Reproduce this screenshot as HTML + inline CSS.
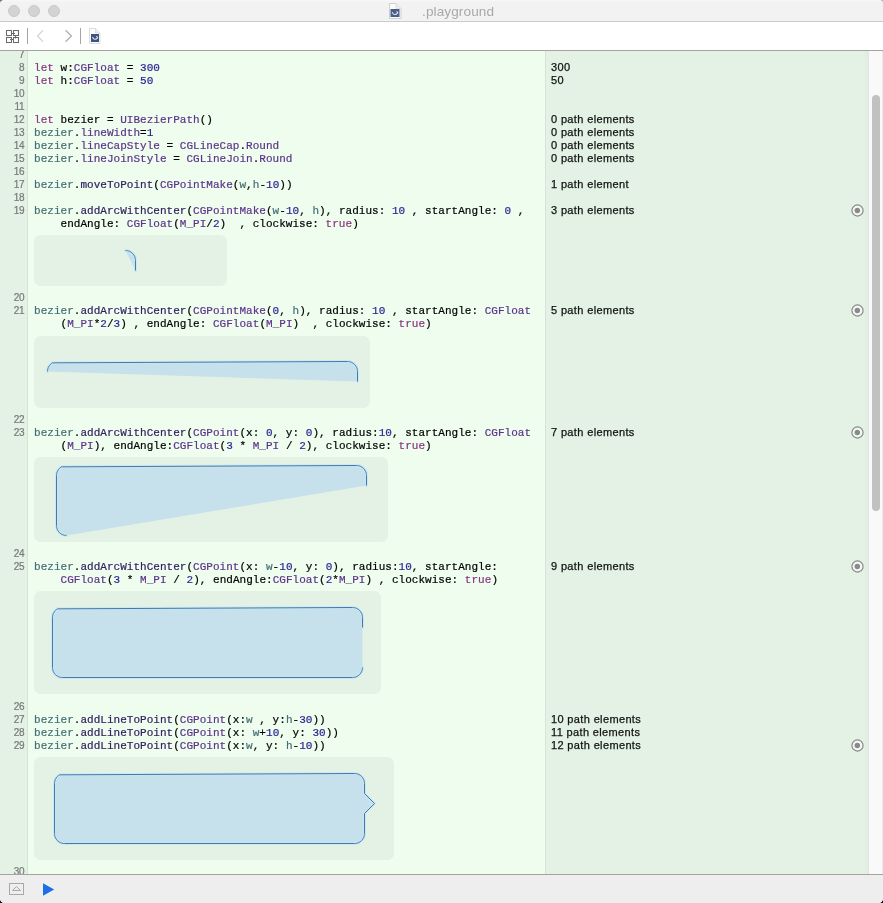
<!DOCTYPE html>
<html><head><meta charset="utf-8"><title>playground</title>
<style>
*{margin:0;padding:0;box-sizing:border-box}
html,body{width:883px;height:903px;overflow:hidden;background:linear-gradient(transparent 50%,#111517 50%),linear-gradient(to right,#6f7782,#b9c1ca)}
#win{position:absolute;left:0;top:0;width:883px;height:903px;overflow:hidden;border-radius:4.5px;background:#fff}
body{position:relative;font-family:"Liberation Sans",sans-serif}
i{font-style:normal}
#tb{position:absolute;left:0;top:0;width:883px;height:22px;background:linear-gradient(#f7f7f7,#f2f2f2 3px);border-bottom:1px solid #cbcbcb}
.tl{position:absolute;top:5px;width:12px;height:12px;border-radius:50%;background:#d3d3d3;border:1px solid #c8c8c8}
#ttl{position:absolute;left:421.5px;top:3.5px;font-size:13.6px;color:#a9a9a9;letter-spacing:0.1px;will-change:transform}
#toolbar{position:absolute;left:0;top:22px;width:883px;height:29px;background:#fff;border-bottom:1px solid #a3a3a3}
#ed{position:absolute;left:0;top:51px;width:883px;height:823px;background:#effdef;overflow:hidden}
#gut{position:absolute;left:0;top:0;width:28px;height:823px;background:#e4f2e5;border-right:1px solid #d3e3d4}
#res{position:absolute;left:545px;top:0;width:323px;height:823px;background:linear-gradient(to right,#e3f2e4 318px,#dfe9e2 323px);border-left:1px solid #d6e4d7}
#sb{position:absolute;left:868px;top:0;width:15px;height:823px;background:#f9f9fa;border-left:1px solid #e4e6e4;box-shadow:inset -1px 0 #ebebeb}
#thumb{position:absolute;left:872px;top:44px;width:8px;height:416px;border-radius:4px;background:#c1c1c1}
.ln{position:absolute;left:0;width:24.2px;text-align:right;font-size:10px;line-height:13px;color:#777;height:13px;will-change:transform;letter-spacing:-0.3px;-webkit-text-stroke:0.2px}
.cd{position:absolute;left:34px;font-family:"Liberation Mono",monospace;font-size:11px;line-height:13px;white-space:pre;color:#000;letter-spacing:0.024px;will-change:transform;-webkit-text-stroke:0.2px}
.rs{position:absolute;left:551px;font-size:11px;line-height:13px;white-space:pre;color:#111;letter-spacing:0.36px;will-change:transform;-webkit-text-stroke:0.25px}
.k{color:#88357F}.n{color:#2B248F}.c{color:#5B3489}.p{color:#436E72}.m{color:#33205F}
.pv{position:absolute;background:#e3f2e4;border-radius:6.5px}
.shp{position:absolute;left:0;top:-51px}
.eye{position:absolute;left:851px;width:12px;height:12px;border-radius:50%;border:1px solid #8d8d8d}
.eye i{position:absolute;left:2.5px;top:2.5px;width:5px;height:5px;border-radius:50%;background:#8a8a8a}
#bot{position:absolute;left:0;top:874px;width:883px;height:29px;background:#eeeeee;border-top:1px solid #a3a3a3}
</style></head><body><div id="win">
<div id="tb">
 <div class="tl" style="left:8px"></div><div class="tl" style="left:28px"></div><div class="tl" style="left:48px"></div>
 <div id="ttl">.playground</div>
</div>
<div id="toolbar"></div>
<svg style="position:absolute;left:0;top:0" width="883" height="51" viewBox="0 0 883 51">
<g fill="none" stroke="#6c6c6c" stroke-width="1.05">
<rect x="6.5" y="30.5" width="5" height="5"/><rect x="13.5" y="30.5" width="5" height="5"/>
<rect x="6.5" y="37.5" width="5" height="5"/><rect x="13.5" y="37.5" width="5" height="5"/>
<path d="M12 33.5H15M15.5 36V38.5M10 39.5H13"/>
</g>
<path d="M27.5 28V44M80.5 28V44" stroke="#a4a4a4" stroke-width="1"/>
<path d="M43 30.3L37.6 36L43 41.7" fill="none" stroke="#d6d6d6" stroke-width="1.3"/>
<path d="M65.6 30.3L71.4 36L65.6 41.7" fill="none" stroke="#b0b0b0" stroke-width="1.3"/>
<path d="M89.5 28.5H95.5L100 33V43.5H89.5Z" fill="#fcfcfc" stroke="#dcdcdc" stroke-width="1"/>
<path d="M95.5 28.5V33H100" fill="#eeeeee" stroke="#d8d8d8" stroke-width="0.8"/>
<rect x="91" y="34" width="8" height="8" fill="#3e5380"/>
<path d="M92.6 36.8C93.2 39.6 95.8 40.2 97.6 37.6L96.4 36.2" fill="none" stroke="#dde4f0" stroke-width="1.1"/>
<path d="M389.5 3.5H396L401 8.5V18.5H389.5Z" fill="#fbfbfb" stroke="#cfcfcf" stroke-width="1"/>
<path d="M396 3.5V8.5H401" fill="#eeeeee" stroke="#d8d8d8" stroke-width="0.8"/>
<rect x="390.5" y="9" width="9" height="8" fill="#4a5f85"/>
<path d="M392.2 12C392.8 14.8 395.6 15.4 397.8 12.8L396.6 11.4" fill="none" stroke="#dde4f0" stroke-width="1.1"/>
</svg>
<div id="ed">
<div id="gut"></div>
<div id="res"></div>
<div id="sb"></div>
<div id="thumb"></div>
<div class="pv" style="left:34px;top:184px;width:193px;height:51px"></div><div class="pv" style="left:34px;top:284.5px;width:336px;height:72.5px"></div><div class="pv" style="left:34px;top:406px;width:354px;height:85px"></div><div class="pv" style="left:34px;top:540px;width:347px;height:103px"></div><div class="pv" style="left:34px;top:706px;width:360px;height:103px"></div>
<svg class="shp" width="883" height="903" viewBox="0 0 883 903"><path d="M135.50 270.50 L135.50 260.50 L135.45 259.52 L135.31 258.55 L135.07 257.60 L134.74 256.67 L134.32 255.79 L133.81 254.94 L133.23 254.16 L132.57 253.43 L131.84 252.77 L131.06 252.19 L130.21 251.68 L129.33 251.26 L128.40 250.93 L127.45 250.69 L126.48 250.55 L125.50 250.50 Z" fill="#C6E1EB" stroke="none"/><path d="M135.50 270.50 L135.50 260.50 L135.45 259.52 L135.31 258.55 L135.07 257.60 L134.74 256.67 L134.32 255.79 L133.81 254.94 L133.23 254.16 L132.57 253.43 L131.84 252.77 L131.06 252.19 L130.21 251.68 L129.33 251.26 L128.40 250.93 L127.45 250.69 L126.48 250.55 L125.50 250.50" fill="none" stroke="#c4e6f8" stroke-width="3" stroke-linejoin="round" stroke-linecap="round" opacity="0.8"/><path d="M135.50 270.50 L135.50 260.50 L135.45 259.52 L135.31 258.55 L135.07 257.60 L134.74 256.67 L134.32 255.79 L133.81 254.94 L133.23 254.16 L132.57 253.43 L131.84 252.77 L131.06 252.19 L130.21 251.68 L129.33 251.26 L128.40 250.93 L127.45 250.69 L126.48 250.55 L125.50 250.50" fill="none" stroke="#4679A6" stroke-width="1"/><path d="M357.50 381.50 L357.50 371.50 L357.45 370.52 L357.31 369.55 L357.07 368.60 L356.74 367.67 L356.32 366.79 L355.81 365.94 L355.23 365.16 L354.57 364.43 L353.84 363.77 L353.06 363.19 L352.21 362.68 L351.33 362.26 L350.40 361.93 L349.45 361.69 L348.48 361.55 L347.50 361.50 L52.50 362.84 L51.94 363.19 L51.41 363.57 L50.91 363.98 L50.43 364.43 L49.98 364.91 L49.57 365.41 L49.19 365.94 L48.84 366.50 L48.53 367.08 L48.26 367.67 L48.03 368.29 L47.84 368.91 L47.69 369.55 L47.59 370.19 L47.52 370.85 L47.50 371.50 Z" fill="#C6E1EB" stroke="none"/><path d="M357.50 381.50 L357.50 371.50 L357.45 370.52 L357.31 369.55 L357.07 368.60 L356.74 367.67 L356.32 366.79 L355.81 365.94 L355.23 365.16 L354.57 364.43 L353.84 363.77 L353.06 363.19 L352.21 362.68 L351.33 362.26 L350.40 361.93 L349.45 361.69 L348.48 361.55 L347.50 361.50 L52.50 362.84 L51.94 363.19 L51.41 363.57 L50.91 363.98 L50.43 364.43 L49.98 364.91 L49.57 365.41 L49.19 365.94 L48.84 366.50 L48.53 367.08 L48.26 367.67 L48.03 368.29 L47.84 368.91 L47.69 369.55 L47.59 370.19 L47.52 370.85 L47.50 371.50" fill="none" stroke="#c4e6f8" stroke-width="3" stroke-linejoin="round" stroke-linecap="round" opacity="0.8"/><path d="M357.50 381.50 L357.50 371.50 L357.45 370.52 L357.31 369.55 L357.07 368.60 L356.74 367.67 L356.32 366.79 L355.81 365.94 L355.23 365.16 L354.57 364.43 L353.84 363.77 L353.06 363.19 L352.21 362.68 L351.33 362.26 L350.40 361.93 L349.45 361.69 L348.48 361.55 L347.50 361.50 L52.50 362.84 L51.94 363.19 L51.41 363.57 L50.91 363.98 L50.43 364.43 L49.98 364.91 L49.57 365.41 L49.19 365.94 L48.84 366.50 L48.53 367.08 L48.26 367.67 L48.03 368.29 L47.84 368.91 L47.69 369.55 L47.59 370.19 L47.52 370.85 L47.50 371.50" fill="none" stroke="#4679A6" stroke-width="1"/><path d="M366.50 485.50 L366.50 475.50 L366.45 474.52 L366.31 473.55 L366.07 472.60 L365.74 471.67 L365.32 470.79 L364.81 469.94 L364.23 469.16 L363.57 468.43 L362.84 467.77 L362.06 467.19 L361.21 466.68 L360.33 466.26 L359.40 465.93 L358.45 465.69 L357.48 465.55 L356.50 465.50 L61.50 466.84 L60.94 467.19 L60.41 467.57 L59.91 467.98 L59.43 468.43 L58.98 468.91 L58.57 469.41 L58.19 469.94 L57.84 470.50 L57.53 471.08 L57.26 471.67 L57.03 472.29 L56.84 472.91 L56.69 473.55 L56.59 474.19 L56.52 474.85 L56.50 475.50 L56.50 525.50 L56.55 526.48 L56.69 527.45 L56.93 528.40 L57.26 529.33 L57.68 530.21 L58.19 531.06 L58.77 531.84 L59.43 532.57 L60.16 533.23 L60.94 533.81 L61.79 534.32 L62.67 534.74 L63.60 535.07 L64.55 535.31 L65.52 535.45 L66.50 535.50 Z" fill="#C6E1EB" stroke="none"/><path d="M366.50 485.50 L366.50 475.50 L366.45 474.52 L366.31 473.55 L366.07 472.60 L365.74 471.67 L365.32 470.79 L364.81 469.94 L364.23 469.16 L363.57 468.43 L362.84 467.77 L362.06 467.19 L361.21 466.68 L360.33 466.26 L359.40 465.93 L358.45 465.69 L357.48 465.55 L356.50 465.50 L61.50 466.84 L60.94 467.19 L60.41 467.57 L59.91 467.98 L59.43 468.43 L58.98 468.91 L58.57 469.41 L58.19 469.94 L57.84 470.50 L57.53 471.08 L57.26 471.67 L57.03 472.29 L56.84 472.91 L56.69 473.55 L56.59 474.19 L56.52 474.85 L56.50 475.50 L56.50 525.50 L56.55 526.48 L56.69 527.45 L56.93 528.40 L57.26 529.33 L57.68 530.21 L58.19 531.06 L58.77 531.84 L59.43 532.57 L60.16 533.23 L60.94 533.81 L61.79 534.32 L62.67 534.74 L63.60 535.07 L64.55 535.31 L65.52 535.45 L66.50 535.50" fill="none" stroke="#c4e6f8" stroke-width="3" stroke-linejoin="round" stroke-linecap="round" opacity="0.8"/><path d="M366.50 485.50 L366.50 475.50 L366.45 474.52 L366.31 473.55 L366.07 472.60 L365.74 471.67 L365.32 470.79 L364.81 469.94 L364.23 469.16 L363.57 468.43 L362.84 467.77 L362.06 467.19 L361.21 466.68 L360.33 466.26 L359.40 465.93 L358.45 465.69 L357.48 465.55 L356.50 465.50 L61.50 466.84 L60.94 467.19 L60.41 467.57 L59.91 467.98 L59.43 468.43 L58.98 468.91 L58.57 469.41 L58.19 469.94 L57.84 470.50 L57.53 471.08 L57.26 471.67 L57.03 472.29 L56.84 472.91 L56.69 473.55 L56.59 474.19 L56.52 474.85 L56.50 475.50 L56.50 525.50 L56.55 526.48 L56.69 527.45 L56.93 528.40 L57.26 529.33 L57.68 530.21 L58.19 531.06 L58.77 531.84 L59.43 532.57 L60.16 533.23 L60.94 533.81 L61.79 534.32 L62.67 534.74 L63.60 535.07 L64.55 535.31 L65.52 535.45 L66.50 535.50" fill="none" stroke="#4679A6" stroke-width="1"/><path d="M362.50 627.50 L362.50 617.50 L362.45 616.52 L362.31 615.55 L362.07 614.60 L361.74 613.67 L361.32 612.79 L360.81 611.94 L360.23 611.16 L359.57 610.43 L358.84 609.77 L358.06 609.19 L357.21 608.68 L356.33 608.26 L355.40 607.93 L354.45 607.69 L353.48 607.55 L352.50 607.50 L57.50 608.84 L56.94 609.19 L56.41 609.57 L55.91 609.98 L55.43 610.43 L54.98 610.91 L54.57 611.41 L54.19 611.94 L53.84 612.50 L53.53 613.08 L53.26 613.67 L53.03 614.29 L52.84 614.91 L52.69 615.55 L52.59 616.19 L52.52 616.85 L52.50 617.50 L52.50 667.50 L52.55 668.48 L52.69 669.45 L52.93 670.40 L53.26 671.33 L53.68 672.21 L54.19 673.06 L54.77 673.84 L55.43 674.57 L56.16 675.23 L56.94 675.81 L57.79 676.32 L58.67 676.74 L59.60 677.07 L60.55 677.31 L61.52 677.45 L62.50 677.50 L352.50 677.50 L353.48 677.45 L354.45 677.31 L355.40 677.07 L356.33 676.74 L357.21 676.32 L358.06 675.81 L358.84 675.23 L359.57 674.57 L360.23 673.84 L360.81 673.06 L361.32 672.21 L361.74 671.33 L362.07 670.40 L362.31 669.45 L362.45 668.48 L362.50 667.50 Z" fill="#C6E1EB" stroke="none"/><path d="M362.50 627.50 L362.50 617.50 L362.45 616.52 L362.31 615.55 L362.07 614.60 L361.74 613.67 L361.32 612.79 L360.81 611.94 L360.23 611.16 L359.57 610.43 L358.84 609.77 L358.06 609.19 L357.21 608.68 L356.33 608.26 L355.40 607.93 L354.45 607.69 L353.48 607.55 L352.50 607.50 L57.50 608.84 L56.94 609.19 L56.41 609.57 L55.91 609.98 L55.43 610.43 L54.98 610.91 L54.57 611.41 L54.19 611.94 L53.84 612.50 L53.53 613.08 L53.26 613.67 L53.03 614.29 L52.84 614.91 L52.69 615.55 L52.59 616.19 L52.52 616.85 L52.50 617.50 L52.50 667.50 L52.55 668.48 L52.69 669.45 L52.93 670.40 L53.26 671.33 L53.68 672.21 L54.19 673.06 L54.77 673.84 L55.43 674.57 L56.16 675.23 L56.94 675.81 L57.79 676.32 L58.67 676.74 L59.60 677.07 L60.55 677.31 L61.52 677.45 L62.50 677.50 L352.50 677.50 L353.48 677.45 L354.45 677.31 L355.40 677.07 L356.33 676.74 L357.21 676.32 L358.06 675.81 L358.84 675.23 L359.57 674.57 L360.23 673.84 L360.81 673.06 L361.32 672.21 L361.74 671.33 L362.07 670.40 L362.31 669.45 L362.45 668.48 L362.50 667.50" fill="none" stroke="#c4e6f8" stroke-width="3" stroke-linejoin="round" stroke-linecap="round" opacity="0.8"/><path d="M362.50 627.50 L362.50 617.50 L362.45 616.52 L362.31 615.55 L362.07 614.60 L361.74 613.67 L361.32 612.79 L360.81 611.94 L360.23 611.16 L359.57 610.43 L358.84 609.77 L358.06 609.19 L357.21 608.68 L356.33 608.26 L355.40 607.93 L354.45 607.69 L353.48 607.55 L352.50 607.50 L57.50 608.84 L56.94 609.19 L56.41 609.57 L55.91 609.98 L55.43 610.43 L54.98 610.91 L54.57 611.41 L54.19 611.94 L53.84 612.50 L53.53 613.08 L53.26 613.67 L53.03 614.29 L52.84 614.91 L52.69 615.55 L52.59 616.19 L52.52 616.85 L52.50 617.50 L52.50 667.50 L52.55 668.48 L52.69 669.45 L52.93 670.40 L53.26 671.33 L53.68 672.21 L54.19 673.06 L54.77 673.84 L55.43 674.57 L56.16 675.23 L56.94 675.81 L57.79 676.32 L58.67 676.74 L59.60 677.07 L60.55 677.31 L61.52 677.45 L62.50 677.50 L352.50 677.50 L353.48 677.45 L354.45 677.31 L355.40 677.07 L356.33 676.74 L357.21 676.32 L358.06 675.81 L358.84 675.23 L359.57 674.57 L360.23 673.84 L360.81 673.06 L361.32 672.21 L361.74 671.33 L362.07 670.40 L362.31 669.45 L362.45 668.48 L362.50 667.50" fill="none" stroke="#4679A6" stroke-width="1"/><path d="M364.50 793.50 L364.50 783.50 L364.45 782.52 L364.31 781.55 L364.07 780.60 L363.74 779.67 L363.32 778.79 L362.81 777.94 L362.23 777.16 L361.57 776.43 L360.84 775.77 L360.06 775.19 L359.21 774.68 L358.33 774.26 L357.40 773.93 L356.45 773.69 L355.48 773.55 L354.50 773.50 L59.50 774.84 L58.94 775.19 L58.41 775.57 L57.91 775.98 L57.43 776.43 L56.98 776.91 L56.57 777.41 L56.19 777.94 L55.84 778.50 L55.53 779.08 L55.26 779.67 L55.03 780.29 L54.84 780.91 L54.69 781.55 L54.59 782.19 L54.52 782.85 L54.50 783.50 L54.50 833.50 L54.55 834.48 L54.69 835.45 L54.93 836.40 L55.26 837.33 L55.68 838.21 L56.19 839.06 L56.77 839.84 L57.43 840.57 L58.16 841.23 L58.94 841.81 L59.79 842.32 L60.67 842.74 L61.60 843.07 L62.55 843.31 L63.52 843.45 L64.50 843.50 L354.50 843.50 L355.48 843.45 L356.45 843.31 L357.40 843.07 L358.33 842.74 L359.21 842.32 L360.06 841.81 L360.84 841.23 L361.57 840.57 L362.23 839.84 L362.81 839.06 L363.32 838.21 L363.74 837.33 L364.07 836.40 L364.31 835.45 L364.45 834.48 L364.50 833.50 L364.50 813.50 L374.50 803.50 L364.50 793.50 Z" fill="#C6E1EB" stroke="none"/><path d="M364.50 793.50 L364.50 783.50 L364.45 782.52 L364.31 781.55 L364.07 780.60 L363.74 779.67 L363.32 778.79 L362.81 777.94 L362.23 777.16 L361.57 776.43 L360.84 775.77 L360.06 775.19 L359.21 774.68 L358.33 774.26 L357.40 773.93 L356.45 773.69 L355.48 773.55 L354.50 773.50 L59.50 774.84 L58.94 775.19 L58.41 775.57 L57.91 775.98 L57.43 776.43 L56.98 776.91 L56.57 777.41 L56.19 777.94 L55.84 778.50 L55.53 779.08 L55.26 779.67 L55.03 780.29 L54.84 780.91 L54.69 781.55 L54.59 782.19 L54.52 782.85 L54.50 783.50 L54.50 833.50 L54.55 834.48 L54.69 835.45 L54.93 836.40 L55.26 837.33 L55.68 838.21 L56.19 839.06 L56.77 839.84 L57.43 840.57 L58.16 841.23 L58.94 841.81 L59.79 842.32 L60.67 842.74 L61.60 843.07 L62.55 843.31 L63.52 843.45 L64.50 843.50 L354.50 843.50 L355.48 843.45 L356.45 843.31 L357.40 843.07 L358.33 842.74 L359.21 842.32 L360.06 841.81 L360.84 841.23 L361.57 840.57 L362.23 839.84 L362.81 839.06 L363.32 838.21 L363.74 837.33 L364.07 836.40 L364.31 835.45 L364.45 834.48 L364.50 833.50 L364.50 813.50 L374.50 803.50 L364.50 793.50" fill="none" stroke="#c4e6f8" stroke-width="3" stroke-linejoin="round" stroke-linecap="round" opacity="0.8"/><path d="M364.50 793.50 L364.50 783.50 L364.45 782.52 L364.31 781.55 L364.07 780.60 L363.74 779.67 L363.32 778.79 L362.81 777.94 L362.23 777.16 L361.57 776.43 L360.84 775.77 L360.06 775.19 L359.21 774.68 L358.33 774.26 L357.40 773.93 L356.45 773.69 L355.48 773.55 L354.50 773.50 L59.50 774.84 L58.94 775.19 L58.41 775.57 L57.91 775.98 L57.43 776.43 L56.98 776.91 L56.57 777.41 L56.19 777.94 L55.84 778.50 L55.53 779.08 L55.26 779.67 L55.03 780.29 L54.84 780.91 L54.69 781.55 L54.59 782.19 L54.52 782.85 L54.50 783.50 L54.50 833.50 L54.55 834.48 L54.69 835.45 L54.93 836.40 L55.26 837.33 L55.68 838.21 L56.19 839.06 L56.77 839.84 L57.43 840.57 L58.16 841.23 L58.94 841.81 L59.79 842.32 L60.67 842.74 L61.60 843.07 L62.55 843.31 L63.52 843.45 L64.50 843.50 L354.50 843.50 L355.48 843.45 L356.45 843.31 L357.40 843.07 L358.33 842.74 L359.21 842.32 L360.06 841.81 L360.84 841.23 L361.57 840.57 L362.23 839.84 L362.81 839.06 L363.32 838.21 L363.74 837.33 L364.07 836.40 L364.31 835.45 L364.45 834.48 L364.50 833.50 L364.50 813.50 L374.50 803.50 L364.50 793.50" fill="none" stroke="#4679A6" stroke-width="1"/></svg>
<div class="ln" style="top:-3px">7</div>
<div class="ln" style="top:10px">8</div>
<div class="ln" style="top:23px">9</div>
<div class="ln" style="top:36px">10</div>
<div class="ln" style="top:49px">11</div>
<div class="ln" style="top:62px">12</div>
<div class="ln" style="top:75px">13</div>
<div class="ln" style="top:88px">14</div>
<div class="ln" style="top:101px">15</div>
<div class="ln" style="top:114px">16</div>
<div class="ln" style="top:127px">17</div>
<div class="ln" style="top:140px">18</div>
<div class="ln" style="top:153px">19</div>
<div class="ln" style="top:240px">20</div>
<div class="ln" style="top:253px">21</div>
<div class="ln" style="top:362px">22</div>
<div class="ln" style="top:375px">23</div>
<div class="ln" style="top:496px">24</div>
<div class="ln" style="top:509px">25</div>
<div class="ln" style="top:649px">26</div>
<div class="ln" style="top:662px">27</div>
<div class="ln" style="top:675px">28</div>
<div class="ln" style="top:688px">29</div>
<div class="ln" style="top:814px">30</div>
<div class="cd" style="top:11px"><i class="k">let</i> w:<i class="c">CGFloat</i> = <i class="n">300</i></div>
<div class="cd" style="top:24px"><i class="k">let</i> h:<i class="c">CGFloat</i> = <i class="n">50</i></div>
<div class="cd" style="top:63px"><i class="k">let</i> bezier = <i class="c">UIBezierPath</i>()</div>
<div class="cd" style="top:76px"><i class="p">bezier</i>.<i class="c">lineWidth</i>=<i class="n">1</i></div>
<div class="cd" style="top:89px"><i class="p">bezier</i>.<i class="c">lineCapStyle</i> = <i class="c">CGLineCap</i>.<i class="c">Round</i></div>
<div class="cd" style="top:102px"><i class="p">bezier</i>.<i class="c">lineJoinStyle</i> = <i class="c">CGLineJoin</i>.<i class="c">Round</i></div>
<div class="cd" style="top:128px"><i class="p">bezier</i>.<i class="m">moveToPoint</i>(<i class="c">CGPointMake</i>(<i class="p">w</i>,<i class="p">h</i>-<i class="n">10</i>))</div>
<div class="cd" style="top:154px"><i class="p">bezier</i>.<i class="m">addArcWithCenter</i>(<i class="c">CGPointMake</i>(<i class="p">w</i>-<i class="n">10</i>, <i class="p">h</i>), radius: <i class="n">10</i> , startAngle: <i class="n">0</i> ,</div>
<div class="cd" style="top:167px">    endAngle: <i class="c">CGFloat</i>(<i class="c">M_PI</i>/<i class="n">2</i>)  , clockwise: <i class="k">true</i>)</div>
<div class="cd" style="top:254px"><i class="p">bezier</i>.<i class="m">addArcWithCenter</i>(<i class="c">CGPointMake</i>(<i class="n">0</i>, <i class="p">h</i>), radius: <i class="n">10</i> , startAngle: <i class="c">CGFloat</i></div>
<div class="cd" style="top:267px">    (<i class="c">M_PI</i>*<i class="n">2</i>/<i class="n">3</i>) , endAngle: <i class="c">CGFloat</i>(<i class="c">M_PI</i>)  , clockwise: <i class="k">true</i>)</div>
<div class="cd" style="top:376px"><i class="p">bezier</i>.<i class="m">addArcWithCenter</i>(<i class="c">CGPoint</i>(x: <i class="n">0</i>, y: <i class="n">0</i>), radius:<i class="n">10</i>, startAngle: <i class="c">CGFloat</i></div>
<div class="cd" style="top:389px">    (<i class="c">M_PI</i>), endAngle:<i class="c">CGFloat</i>(<i class="n">3</i> * <i class="c">M_PI</i> / <i class="n">2</i>), clockwise: <i class="k">true</i>)</div>
<div class="cd" style="top:510px"><i class="p">bezier</i>.<i class="m">addArcWithCenter</i>(<i class="c">CGPoint</i>(x: <i class="p">w</i>-<i class="n">10</i>, y: <i class="n">0</i>), radius:<i class="n">10</i>, startAngle:</div>
<div class="cd" style="top:523px">    <i class="c">CGFloat</i>(<i class="n">3</i> * <i class="c">M_PI</i> / <i class="n">2</i>), endAngle:<i class="c">CGFloat</i>(<i class="n">2</i>*<i class="c">M_PI</i>) , clockwise: <i class="k">true</i>)</div>
<div class="cd" style="top:663px"><i class="p">bezier</i>.<i class="m">addLineToPoint</i>(<i class="c">CGPoint</i>(x:<i class="p">w</i> , y:<i class="p">h</i>-<i class="n">30</i>))</div>
<div class="cd" style="top:676px"><i class="p">bezier</i>.<i class="m">addLineToPoint</i>(<i class="c">CGPoint</i>(x: <i class="p">w</i>+<i class="n">10</i>, y: <i class="n">30</i>))</div>
<div class="cd" style="top:689px"><i class="p">bezier</i>.<i class="m">addLineToPoint</i>(<i class="c">CGPoint</i>(x:<i class="p">w</i>, y: <i class="p">h</i>-<i class="n">10</i>))</div>
<div class="rs" style="top:10px">300</div>
<div class="rs" style="top:23px">50</div>
<div class="rs" style="top:62px">0 path elements</div>
<div class="rs" style="top:75px">0 path elements</div>
<div class="rs" style="top:88px">0 path elements</div>
<div class="rs" style="top:101px">0 path elements</div>
<div class="rs" style="top:127px">1 path element</div>
<div class="rs" style="top:153px">3 path elements</div>
<div class="rs" style="top:253px">5 path elements</div>
<div class="rs" style="top:375px">7 path elements</div>
<div class="rs" style="top:509px">9 path elements</div>
<div class="rs" style="top:662px">10 path elements</div>
<div class="rs" style="top:675px">11 path elements</div>
<div class="rs" style="top:688px">12 path elements</div>
<svg style="position:absolute;left:840px;top:0" width="30" height="823" viewBox="840 51 30 823"><circle cx="857.5" cy="210.5" r="5.6" fill="#f2f9f2" stroke="#858585" stroke-width="1.15"/><circle cx="857.3" cy="210.5" r="2.75" fill="#8a8a8a"/><circle cx="857.5" cy="310.5" r="5.6" fill="#f2f9f2" stroke="#858585" stroke-width="1.15"/><circle cx="857.3" cy="310.5" r="2.75" fill="#8a8a8a"/><circle cx="857.5" cy="432.5" r="5.6" fill="#f2f9f2" stroke="#858585" stroke-width="1.15"/><circle cx="857.3" cy="432.5" r="2.75" fill="#8a8a8a"/><circle cx="857.5" cy="566.5" r="5.6" fill="#f2f9f2" stroke="#858585" stroke-width="1.15"/><circle cx="857.3" cy="566.5" r="2.75" fill="#8a8a8a"/><circle cx="857.5" cy="745.5" r="5.6" fill="#f2f9f2" stroke="#858585" stroke-width="1.15"/><circle cx="857.3" cy="745.5" r="2.75" fill="#8a8a8a"/></svg>
</div>
<div id="bot"><svg style="position:absolute;left:0;top:-1px" width="883" height="29" viewBox="0 874 883 29">
<rect x="9.5" y="883.5" width="14" height="11" fill="none" stroke="#a9a9a9" stroke-width="1"/>
<path d="M12.5 890.5H20.5L16.5 886.5Z" fill="none" stroke="#a9a9a9" stroke-width="1"/>
<path d="M43 883.3V895.8L54.2 889.5Z" fill="#1d6fe6"/>
</svg></div>
</div></body></html>
